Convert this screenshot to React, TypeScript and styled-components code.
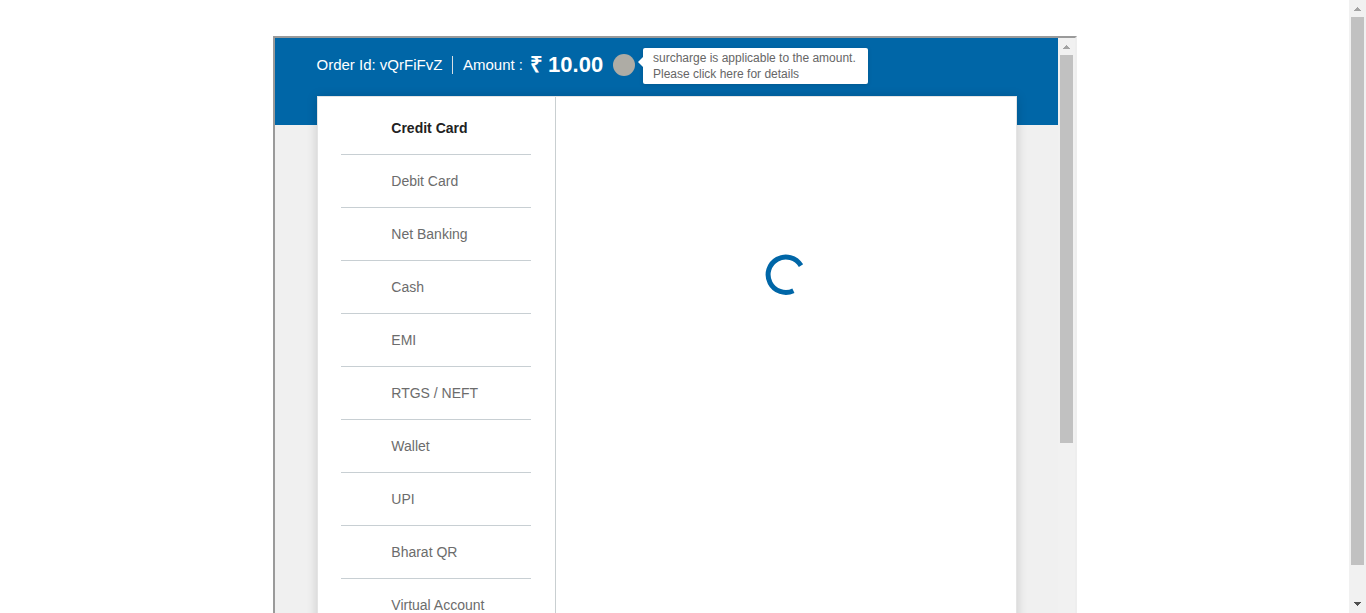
import React from 'react';
import styled, { createGlobalStyle } from 'styled-components';

const GlobalStyle = createGlobalStyle`
  * { box-sizing: border-box; }
  body {
    margin: 0;
    background: #fff;
    font-family: "Liberation Sans", Arial, sans-serif;
    overflow: hidden;
  }
`;

const Page = styled.div`
  display: flex;
  width: 1366px;
  height: 613px;
  overflow: hidden;
`;

const Main = styled.main`
  flex: 1;
  padding: 36px 0 0 273px;
  overflow: hidden;
`;

const Frame = styled.div`
  display: flex;
  width: 804px;
  height: 620px;
  border: 2px solid;
  border-color: #9a9a9a #eeeeee #eeeeee #9a9a9a;
`;

const Content = styled.div`
  flex: 1;
  padding-left: 42px;
  background: linear-gradient(#0066a7 87px, #f0f0f0 87px);
`;

const Track = styled.div`
  display: flex;
  flex-direction: column;
  align-items: center;
  flex: none;
  width: 17px;
  background: #f1f1f1;
`;

const Thumb = styled.div<{ $length: number }>`
  flex: none;
  width: 13px;
  height: ${(p) => p.$length}px;
  background: #c1c1c1;
`;

const Arrow = styled.svg`
  display: block;
  flex: none;
  width: 17px;
  height: 17px;
`;

const ArrowEnd = styled(Arrow)`
  margin-top: auto;
`;

const Header = styled.header`
  display: flex;
  height: 58px;
  color: #fff;
  font-size: 15px;
  line-height: 18px;
  white-space: pre;
`;

const Order = styled.div`
  width: 136px;
  height: 18px;
  margin-top: 18px;
  border-right: 1px solid #d8dfe4;
  text-indent: -0.5px;
`;

const AmountLabel = styled.div`
  width: 67px;
  margin: 18px 0 0 10px;
`;

const Amount = styled.strong`
  width: 83px;
  margin-top: 13px;
  font-size: 22px;
  line-height: 27px;
  word-spacing: -1px;
`;

const InfoDot = styled.span`
  width: 22px;
  height: 22px;
  margin-top: 16px;
  border-radius: 50%;
  background: #aeaca5;
`;

const Hint = styled.div`
  position: relative;
  width: 225px;
  height: 36px;
  margin: 10px 0 0 8px;
  padding: 2px 10px;
  border-radius: 2px;
  background: #fff;
  color: #666;
  font-size: 12px;
  line-height: 16px;
  box-shadow: 0 1px 4px rgba(0, 0, 0, 0.15);

  &::before {
    content: '';
    position: absolute;
    left: -5px;
    top: 9px;
    border: solid transparent;
    border-width: 5px 5px 5px 0;
    border-right-color: #fff;
  }
`;

const Card = styled.section`
  display: flex;
  width: 700px;
  height: 620px;
  border: 1px solid #e4e4e4;
  background: #fff;
  box-shadow: 0 1px 10px rgba(0, 0, 0, 0.17);
`;

const Menu = styled.nav`
  width: 238px;
  padding: 5px 24px 0 23px;
  border-right: 1px solid #c9cfd1;
`;

const MenuItem = styled.div<{ $active?: boolean }>`
  height: 53px;
  padding-left: 50.3px;
  border-bottom: 1px solid #c8cfd3;
  color: ${(p) => (p.$active ? '#222' : '#6c6c6c')};
  font-size: 14px;
  font-weight: ${(p) => (p.$active ? 700 : 400)};
  line-height: 52px;
`;

const Panel = styled.div`
  display: flex;
  flex: 1;
  justify-content: center;
  padding-top: 157px;
`;

const Spinner = styled.svg`
  width: 42px;
  height: 42px;
`;

const methods = [
  'Credit Card',
  'Debit Card',
  'Net Banking',
  'Cash',
  'EMI',
  'RTGS / NEFT',
  'Wallet',
  'UPI',
  'Bharat QR',
  'Virtual Account',
];

const UpArrow = () => (
  <Arrow viewBox="0 0 17 17" shapeRendering="crispEdges">
    <path d="M8 7h1v1h1v1h1v1h1v1H5v-1h1V9h1V8h1z" fill="#a3a3a3" />
  </Arrow>
);

export default function App() {
  return (
    <>
      <GlobalStyle />
      <Page>
        <Main>
          <Frame>
            <Content>
              <Header>
                <Order>Order Id: vQrFiFvZ</Order>
                <AmountLabel>Amount :</AmountLabel>
                <Amount>₹ 10.00</Amount>
                <InfoDot />
                <Hint>
                  surcharge is applicable to the amount.
                  <br />
                  Please click here for details
                </Hint>
              </Header>
              <Card>
                <Menu>
                  {methods.map((name, i) => (
                    <MenuItem key={name} $active={i === 0}>
                      {name}
                    </MenuItem>
                  ))}
                </Menu>
                <Panel>
                  <Spinner viewBox="0 0 42 42" fill="none">
                    <path
                      d="M36 11.6A17.7 17.7 0 1 0 28.4 36.7"
                      stroke="#0066a7"
                      strokeWidth="5"
                    />
                  </Spinner>
                </Panel>
              </Card>
            </Content>
            <Track>
              <UpArrow />
              <Thumb $length={388} />
            </Track>
          </Frame>
        </Main>
        <Track>
          <UpArrow />
          <Thumb $length={548} />
          <ArrowEnd viewBox="0 0 17 17" shapeRendering="crispEdges">
            <path d="M5 6h7v1h-1v1h-1v1H9v1H8V9H7V8H6V7H5z" fill="#505050" />
          </ArrowEnd>
        </Track>
      </Page>
    </>
  );
}
